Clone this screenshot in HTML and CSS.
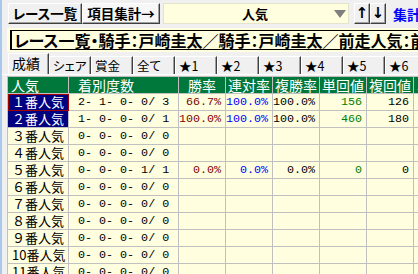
FILE: index.html
```html
<!DOCTYPE html>
<html lang="ja">
<head>
  <meta charset="UTF-8">
  <title>項目集計</title>
  <link rel="stylesheet" href="styles.css">
</head>
<body>
  <div class="window">
    <!-- toolbar -->
    <div class="toolbar">
      <button class="btn btn-list">レース一覧</button>
      <button class="btn btn-sum">項目集計→</button>
      <div class="combo">
        <span class="combo-text">人気</span>
        <span class="caret"></span>
      </div>
      <div class="sort">
        <button class="btn btn-arrow">↑</button>
        <button class="btn btn-arrow">↓</button>
      </div>
      <a class="link">集計表</a>
    </div>

    <!-- condition title -->
    <div class="titlebar">
      <div class="title">レース一覧・騎手：戸崎圭太／騎手：戸崎圭太／前走人気：前走人気</div>
    </div>

    <!-- tabs -->
    <div class="tabs">
      <div class="tab active">成績</div>
      <div class="tab">シェア</div>
      <div class="tab">賞金</div>
      <div class="tab">全て</div>
      <div class="tab">★1</div>
      <div class="tab">★2</div>
      <div class="tab">★3</div>
      <div class="tab">★4</div>
      <div class="tab">★5</div>
      <div class="tab">★6</div>
    </div>

    <!-- grid -->
    <table class="grid">
      <colgroup>
        <col class="c-name"><col class="c-count">
        <col class="c-num"><col class="c-num"><col class="c-num">
        <col class="c-num"><col class="c-num"><col class="c-num">
      </colgroup>
      <thead>
        <tr>
          <th class="h-left">人気</th>
          <th class="h-left h-count">着別度数</th>
          <th>勝率</th>
          <th>連対率</th>
          <th>複勝率</th>
          <th>単回値</th>
          <th>複回値</th>
          <th class="h-left">単</th>
        </tr>
      </thead>
      <tbody>
        <tr>
          <td class="name sel focus">１番人気</td>
          <td class="count">2- 1- 0- 0/ 3</td>
          <td class="num win">66.7%</td>
          <td class="num rentai">100.0%</td>
          <td class="num">100.0%</td>
          <td class="num tan">156</td>
          <td class="num">126</td>
          <td></td>
        </tr>
        <tr>
          <td class="name sel">２番人気</td>
          <td class="count">1- 0- 0- 0/ 1</td>
          <td class="num win">100.0%</td>
          <td class="num rentai">100.0%</td>
          <td class="num">100.0%</td>
          <td class="num tan">460</td>
          <td class="num">180</td>
          <td></td>
        </tr>
        <tr>
          <td class="name">３番人気</td>
          <td class="count">0- 0- 0- 0/ 0</td>
          <td></td><td></td><td></td><td></td><td></td><td></td>
        </tr>
        <tr>
          <td class="name">４番人気</td>
          <td class="count">0- 0- 0- 0/ 0</td>
          <td></td><td></td><td></td><td></td><td></td><td></td>
        </tr>
        <tr>
          <td class="name">５番人気</td>
          <td class="count">0- 0- 0- 1/ 1</td>
          <td class="num win">0.0%</td>
          <td class="num rentai">0.0%</td>
          <td class="num">0.0%</td>
          <td class="num tan">0</td>
          <td class="num">0</td>
          <td></td>
        </tr>
        <tr>
          <td class="name">６番人気</td>
          <td class="count">0- 0- 0- 0/ 0</td>
          <td></td><td></td><td></td><td></td><td></td><td></td>
        </tr>
        <tr>
          <td class="name">７番人気</td>
          <td class="count">0- 0- 0- 0/ 0</td>
          <td></td><td></td><td></td><td></td><td></td><td></td>
        </tr>
        <tr>
          <td class="name">８番人気</td>
          <td class="count">0- 0- 0- 0/ 0</td>
          <td></td><td></td><td></td><td></td><td></td><td></td>
        </tr>
        <tr>
          <td class="name">９番人気</td>
          <td class="count">0- 0- 0- 0/ 0</td>
          <td></td><td></td><td></td><td></td><td></td><td></td>
        </tr>
        <tr>
          <td class="name">10番人気</td>
          <td class="count">0- 0- 0- 0/ 0</td>
          <td></td><td></td><td></td><td></td><td></td><td></td>
        </tr>
        <tr>
          <td class="name">11番人気</td>
          <td class="count">0- 0- 0- 0/ 0</td>
          <td></td><td></td><td></td><td></td><td></td><td></td>
        </tr>
      </tbody>
    </table>
  </div>
</body>
</html>
```

FILE: styles.css
```css
/* base */
html, body {
  margin: 0;
  padding: 0;
  background: #f0f0f0;
  overflow: hidden;
}

body {
  width: 418px;
  height: 274px;
  font-family: "Noto Sans CJK JP", sans-serif;
  color: #000;
}

.window {
  border-left: 2px solid #a8c8ec;
  height: 274px;
  box-sizing: border-box;
  overflow: hidden;
}

/* toolbar */
.toolbar {
  display: flex;
  align-items: center;
  height: 21px;
  padding: 3px 0 0 6px;
  white-space: nowrap;
}

.toolbar > * {
  flex: none;
}

.btn {
  font-family: "Noto Sans CJK JP", sans-serif;
  font-weight: bold;
  font-size: 13.5px;
  font-feature-settings: "palt";
  line-height: 17px;
  height: 21px;
  margin: 0;
  padding: 0;
  background: #f0f0f0;
  color: #000;
  border: 1px solid;
  border-color: #fff #404040 #404040 #fff;
  box-shadow: inset -1px -1px #a0a0a0;
  box-sizing: border-box;
  white-space: nowrap;
}

.btn-list {
  width: 74px;
}

.btn-sum {
  width: 78px;
  background: #f7f7f7;
}

.combo {
  display: flex;
  align-items: center;
  width: 186px;
  height: 21px;
  margin-left: 3px;
  background: #ffffe0;
  border: 1px solid #e4e4cc;
  box-sizing: border-box;
}

.combo-text {
  flex: 1;
  text-align: center;
  font-weight: bold;
  font-size: 13px;
  padding-left: 12px;
}

.caret {
  width: 0;
  height: 0;
  margin-right: 2px;
  border-left: 6px solid transparent;
  border-right: 6px solid transparent;
  border-top: 8px solid #808080;
}

.sort {
  display: flex;
  margin-left: 5px;
}

.btn-arrow {
  width: 16px;
  font-size: 15px;
  font-family: "DejaVu Sans", sans-serif;
}

.link {
  margin-left: 7px;
  color: #0000ff;
  font-size: 14px;
  font-weight: bold;
}

/* condition title */
.titlebar {
  margin: 4px 0 0 5px;
  padding: 2px 0 2px 3px;
  background: #ffffe0;
}

.title {
  border: 1px solid #000;
  border-right: 0;
  border-left-width: 2px;
  height: 18px;
  line-height: 18px;
  padding-left: 2px;
  font-weight: bold;
  font-size: 16px;
  font-feature-settings: "palt";
  white-space: nowrap;
  overflow: hidden;
}

/* tabs */
.tabs {
  display: flex;
  align-items: flex-end;
  height: 22px;
  padding-left: 6px;
  border-bottom: 1px solid #fff;
  white-space: nowrap;
  overflow: hidden;
}

.tab {
  flex: none;
  width: 42px;
  height: 18px;
  box-sizing: border-box;
  padding-left: 3px;
  font-size: 12.5px;
  font-feature-settings: "palt";
  line-height: 17px;
  background: #f0f0f0;
  border-top: 1px solid #fff;
  border-left: 1px solid #fff;
  border-right: 1px solid #404040;
  box-shadow: inset -1px 0 #a0a0a0;
}

.tab.active {
  height: 21px;
  width: 41px;
  padding-left: 3px;
  line-height: 19px;
  font-size: 14px;
}

/* grid */
.grid {
  margin: 1px 0 0 5px;
  border-collapse: collapse;
  table-layout: fixed;
  width: 453px;
  font-size: 14px;
}

.c-name { width: 61px; }
.c-count { width: 110px; }
.c-num { width: 47px; }

.grid th,
.grid td {
  height: 16px;
  padding: 0 4px 0 0;
  border: 1px solid #c0c0c0;
  line-height: 16px;
  white-space: nowrap;
  overflow: hidden;
  box-sizing: border-box;
}

.grid th {
  background: #00783c;
  color: #fff;
  font-weight: normal;
  text-align: center;
  padding: 0;
}

.grid th.h-left {
  text-align: left;
  padding-left: 3px;
}

.grid th.h-count {
  padding-left: 9px;
}

.grid td {
  background: #ffffe0;
}

.grid td.name {
  padding-left: 4px;
  padding-right: 0;
  font-size: 13px;
}

.grid td.sel {
  background: #000080;
  color: #fff;
}

.grid td.focus {
  outline: 1px solid #a00000;
  outline-offset: -1px;
}

.grid td.count,
.grid td.num {
  font-family: "Liberation Mono", monospace;
  font-size: 11.7px;
}

.grid td.count {
  padding-left: 9px;
}

.grid td.num {
  text-align: right;
  padding-right: 4px;
}

.grid td.win { color: #800000; }
.grid td.rentai { color: #0000ff; }
.grid td.tan { color: #008000; }
```
